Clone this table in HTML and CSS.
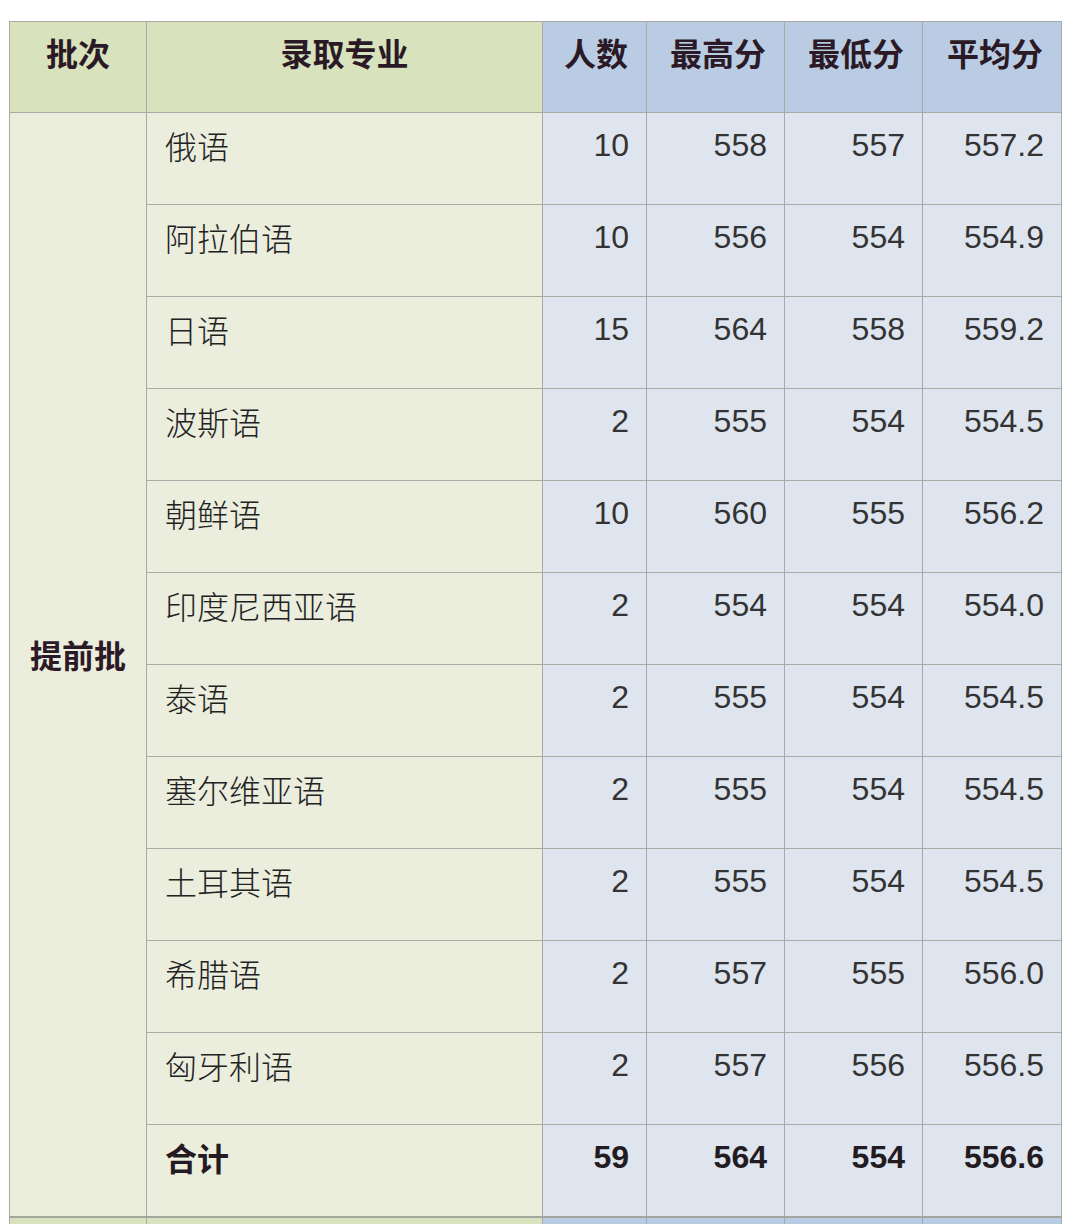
FILE: index.html
```html
<!DOCTYPE html>
<html lang="zh">
<head>
<meta charset="utf-8">
<title>录取分数</title>
<link rel="stylesheet" href="styles.css">
</head>
<body>
<div class="page">
<table class="scores">
  <colgroup>
    <col class="c-batch"><col class="c-major"><col class="c-num"><col class="c-score"><col class="c-score"><col class="c-avg">
  </colgroup>
  <thead>
    <tr>
      <th class="g center">批次</th>
      <th class="g center">录取专业</th>
      <th class="b">人数</th>
      <th class="b">最高分</th>
      <th class="b">最低分</th>
      <th class="b">平均分</th>
    </tr>
  </thead>
  <tbody>
    <tr>
      <td class="batch" rowspan="12"><span>提前批</span></td>
      <td class="major">俄语</td><td class="n">10</td><td class="n">558</td><td class="n">557</td><td class="n">557.2</td>
    </tr>
    <tr><td class="major">阿拉伯语</td><td class="n">10</td><td class="n">556</td><td class="n">554</td><td class="n">554.9</td></tr>
    <tr><td class="major">日语</td><td class="n">15</td><td class="n">564</td><td class="n">558</td><td class="n">559.2</td></tr>
    <tr><td class="major">波斯语</td><td class="n">2</td><td class="n">555</td><td class="n">554</td><td class="n">554.5</td></tr>
    <tr><td class="major">朝鲜语</td><td class="n">10</td><td class="n">560</td><td class="n">555</td><td class="n">556.2</td></tr>
    <tr><td class="major">印度尼西亚语</td><td class="n">2</td><td class="n">554</td><td class="n">554</td><td class="n">554.0</td></tr>
    <tr><td class="major">泰语</td><td class="n">2</td><td class="n">555</td><td class="n">554</td><td class="n">554.5</td></tr>
    <tr><td class="major">塞尔维亚语</td><td class="n">2</td><td class="n">555</td><td class="n">554</td><td class="n">554.5</td></tr>
    <tr><td class="major">土耳其语</td><td class="n">2</td><td class="n">555</td><td class="n">554</td><td class="n">554.5</td></tr>
    <tr><td class="major">希腊语</td><td class="n">2</td><td class="n">557</td><td class="n">555</td><td class="n">556.0</td></tr>
    <tr><td class="major">匈牙利语</td><td class="n">2</td><td class="n">557</td><td class="n">556</td><td class="n">556.5</td></tr>
    <tr class="total"><td class="major">合计</td><td class="n">59</td><td class="n">564</td><td class="n">554</td><td class="n">556.6</td></tr>
    <tr class="next"><td class="g"></td><td class="g"></td><td class="b"></td><td class="b"></td><td class="b"></td><td class="b"></td></tr>
  </tbody>
</table>
</div>
</body>
</html>
```
FILE: styles.css
```css
html, body {
  margin: 0;
  padding: 0;
  background: #ffffff;
}

.page {
  padding: 21px 0 0 9px;
  height: 1203px;
  overflow: hidden;
}

.scores {
  border-collapse: collapse;
  table-layout: fixed;
  width: 1053px;
  font-family: "Noto Sans CJK SC", "Liberation Sans", sans-serif;
  font-size: 32px;
  line-height: 40px;
  color: #2a2a2a;
}

.c-batch { width: 137px; }
.c-major { width: 396px; }
.c-num { width: 104px; }
.c-score { width: 138px; }
.c-avg { width: 139px; }

.scores th,
.scores td {
  border: 1px solid #a9aaa6;
  padding: 12px 17px 0 18px;
  vertical-align: top;
  height: 79px;
  box-sizing: content-box;
}

.scores th {
  font-weight: 700;
  color: #2b1a26;
  text-align: right;
  padding: 10px 18px 0 18px;
  height: 80px;
}

.scores th.center { text-align: center; padding-left: 0; padding-right: 0; }

.g { background: #d8e3bd; }
.b { background: #b9cce3; }

.scores td { background: #dfe5ef; }
.scores td.batch,
.scores td.major { background: #ebeddd; }

.batch {
  vertical-align: middle !important;
  text-align: center;
  font-weight: 700;
  color: #2b1a26;
  padding: 0 0 22px 0 !important;
}

.major {
  text-align: left;
  font-weight: 300;
  color: #222222;
}

.n {
  text-align: right;
  font-family: "Liberation Sans", sans-serif;
  color: #333333;
}

.total td {
  font-weight: 700;
  color: #241a22;
}

.total .n { color: #231b22; }

.next td {
  border-top: 2px solid #a3a59f;
  height: 40px;
}
.next td.g { background: #d8e3bd; }
.next td.b { background: #b9cce3; }
```
